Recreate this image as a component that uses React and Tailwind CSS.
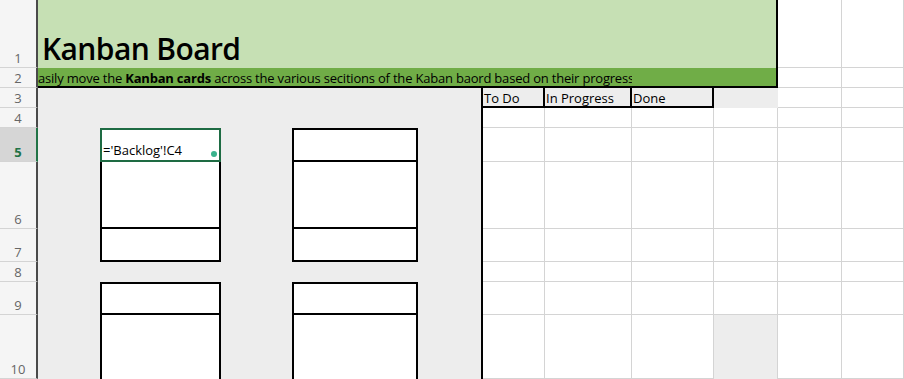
import React from 'react';

const rows = [
  { n: 1, h: 'h-[68px]' },
  { n: 2, h: 'h-[20px]' },
  { n: 3, h: 'h-[20px]' },
  { n: 4, h: 'h-[20px]' },
  { n: 5, h: 'h-[34px]', active: true },
  { n: 6, h: 'h-[67px]' },
  { n: 7, h: 'h-[33px]' },
  { n: 8, h: 'h-[20px]' },
  { n: 9, h: 'h-[33px]' },
  { n: 10, h: 'h-[64px]' },
];

// empty white cells that fill the rest of the sheet (auto placed)
const blanks = Array.from({ length: 47 });

function RowHeaders() {
  return (
    <div className="col-[1] row-[1/11] flex flex-col bg-[#f5f5f5]">
      {rows.map((r) => (
        <div
          key={r.n}
          className={`${r.h} shrink-0 flex items-end justify-center pb-[1px] border-b border-[#d4d4d4] border-r-2 text-[13px] leading-[16px] ${
            r.active
              ? 'bg-[#d6d6d6] border-r-[#217346] text-[#217346] font-bold'
              : 'border-r-[#4a4a4a] text-[#666]'
          }`}
        >
          {r.n}
        </div>
      ))}
    </div>
  );
}

export default function App() {
  return (
    <div
      className="grid w-[904px] h-[379px] overflow-hidden bg-white text-black grid-cols-[38px_62px_121px_71px_126px_65px_62px_87px_82px_64px_64px_62px] grid-rows-[68px_20px_20px_20px_34px_67px_33px_20px_33px_64px]"
      style={{ fontFamily: '"Open Sans", "Noto Sans", sans-serif' }}
    >
      <RowHeaders />

      {/* title band */}
      <div className="col-[2/11] row-[1] bg-[#c6e0b4] border-r-2 border-black flex items-end pl-[4px]">
        <span className="text-[30px] font-semibold leading-[40px] tracking-[-0.6px] -mb-[1px]">Kanban Board</span>
      </div>
      <div className="col-[2/11] row-[2] bg-[#70ad47] border-r-2 border-b-2 border-black">
        <div className="w-[594px] h-full overflow-hidden whitespace-nowrap text-[13px] leading-[20px] tracking-[-0.2px]">
          <span className="-ml-[7px] inline-block">
            Easily move the <b className="font-bold">Kanban cards</b> across the various secitions of the Kaban baord based on their progress
          </span>
        </div>
      </div>

      {/* gray board area */}
      <div className="col-[2/7] row-[3/11] bg-[#ededed] border-r-2 border-black" />

      {/* card 1 */}
      <div className="col-[3] row-[5] relative bg-white border-2 border-[#1e6b43] flex items-end pl-[1px] pb-[1px] text-[13px] leading-[18px]">
        ='Backlog'!C4
        <span className="absolute right-[2px] bottom-[3px] w-[6px] h-[6px] rounded-full bg-[#3ab38d]" />
      </div>
      <div className="col-[3] row-[6] bg-white border-x-2 border-b-2 border-black" />
      <div className="col-[3] row-[7] bg-white border-x-2 border-b-2 border-black" />

      {/* card 2 */}
      <div className="col-[5] row-[5] bg-white border-2 border-black" />
      <div className="col-[5] row-[6] bg-white border-x-2 border-b-2 border-black" />
      <div className="col-[5] row-[7] bg-white border-x-2 border-b-2 border-black" />

      {/* card 3 */}
      <div className="col-[3] row-[9] bg-white border-2 border-black" />
      <div className="col-[3] row-[10] bg-white border-x-2 border-black" />

      {/* card 4 */}
      <div className="col-[5] row-[9] bg-white border-2 border-black" />
      <div className="col-[5] row-[10] bg-white border-x-2 border-black" />

      {/* status header */}
      <div className="col-[7] row-[3] bg-[#ededed] border-r-2 border-b-2 border-black text-[13px] leading-[20px] pl-[1px]">To Do</div>
      <div className="col-[8] row-[3] bg-[#ededed] border-r-2 border-b-2 border-black text-[13px] leading-[20px] pl-[1px]">In Progress</div>
      <div className="col-[9] row-[3] bg-[#ededed] border-r-2 border-b-2 border-black text-[13px] leading-[20px] pl-[1px]">Done</div>
      <div className="col-[10] row-[3] bg-[#ededed]" />
      <div className="col-[10] row-[10] bg-[#ededed] border-r border-[#d4d4d4]" />

      {blanks.map((_, i) => (
        <div key={i} className="border-r border-b border-[#d4d4d4]" />
      ))}
    </div>
  );
}
